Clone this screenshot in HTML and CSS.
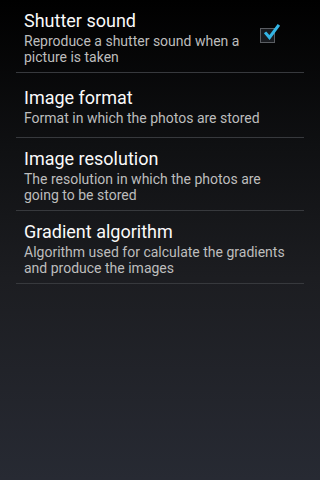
FILE: index.html
```html
<!DOCTYPE html>
<html lang="en">
<head>
    <meta charset="UTF-8">
    <meta name="viewport" content="width=device-width, initial-scale=1.0">
    <title>Settings</title>
    <link rel="stylesheet" href="styles.css">
</head>
<body>
    <ul class="pref-list">
        <li class="pref">
            <div class="pref-text">
                <div class="pref-title">Shutter sound</div>
                <div class="pref-summary">Reproduce a shutter sound when a picture is taken</div>
            </div>
            <div class="pref-widget">
                <span class="checkbox checked">
                    <svg viewBox="0 0 20 20" width="20" height="20">
                        <path d="M5 10.5 L8.5 14.5 L17 3" fill="none" stroke="#33b5e5" stroke-width="3" stroke-linecap="square"/>
                    </svg>
                </span>
            </div>
        </li>
        <li class="pref">
            <div class="pref-text">
                <div class="pref-title">Image format</div>
                <div class="pref-summary">Format in which the photos are stored</div>
            </div>
        </li>
        <li class="pref">
            <div class="pref-text">
                <div class="pref-title">Image resolution</div>
                <div class="pref-summary">The resolution in which the photos are going to be stored</div>
            </div>
        </li>
        <li class="pref">
            <div class="pref-text">
                <div class="pref-title">Gradient algorithm</div>
                <div class="pref-summary">Algorithm used for calculate the gradients and produce the images</div>
            </div>
        </li>
    </ul>
</body>
</html>
```

FILE: styles.css
```css
* {
    margin: 0;
    padding: 0;
    box-sizing: border-box;
}

html, body {
    height: 100%;
}

body {
    background: linear-gradient(180deg, #000 0%, #0f1012 30%, #1c1d21 58%, #272a33 100%);
    color: #fff;
    font-family: Roboto, "Noto Sans", sans-serif;
}

.pref-list {
    list-style: none;
    margin: 0 16px;
}

.pref {
    display: flex;
    align-items: center;
    min-height: 65px;
    padding: 8px 0 7px 8px;
    border-bottom: 1px solid #37393d;
}

.pref-text {
    flex: 1;
    display: flex;
    flex-direction: column;
    justify-content: center;
    padding-right: 6px;
}

.pref-title {
    font-size: 18px;
    line-height: 25px;
    color: #fafafa;
}

.pref-summary {
    font-size: 14px;
    line-height: 16px;
    color: #bdbdbd;
}

.pref-widget {
    width: 32px;
    margin: 0 21px 0 0;
    display: flex;
    justify-content: center;
    align-self: flex-start;
    padding-top: 20px;
}

/* holo style checkbox */
.checkbox {
    position: relative;
    display: block;
    width: 15px;
    height: 15px;
    border: 1px solid #5a5d62;
    background: rgba(40, 44, 50, 0.6);
}

.checkbox svg {
    position: absolute;
    left: 0;
    top: -6px;
}
```
